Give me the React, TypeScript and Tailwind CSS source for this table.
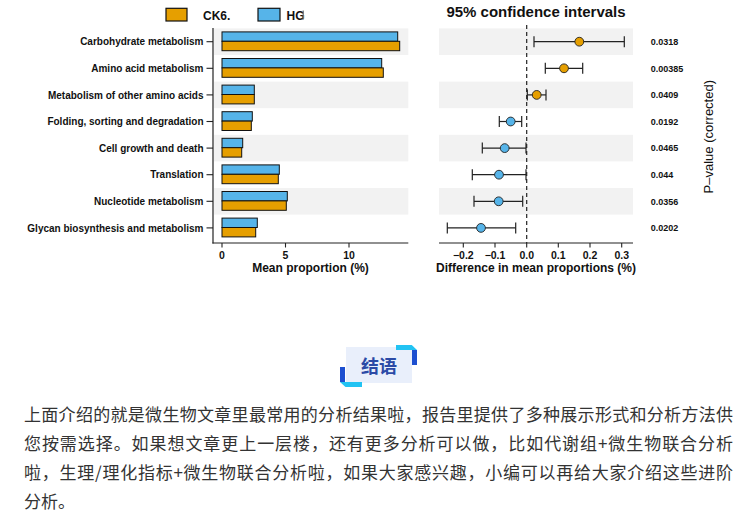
import React from "react";

const rows = [
  "Carbohydrate metabolism",
  "Amino acid metabolism",
  "Metabolism of other amino acids",
  "Folding, sorting and degradation",
  "Cell growth and death",
  "Translation",
  "Nucleotide metabolism",
  "Glycan biosynthesis and metabolism",
];
const blueEnd = [397.7, 381.7, 254.3, 252.3, 242.7, 279.3, 287.3, 257.3];
const orangeEnd = [399.7, 383.3, 254.3, 251.3, 241.7, 278.3, 286.3, 255.7];
const ci: [number, number, number, string][] = [
  [534, 624.3, 579.3, "o"],
  [545.3, 582.7, 564, "o"],
  [527.3, 546, 536.7, "o"],
  [499.3, 521.7, 510.7, "b"],
  [482.3, 526, 504.7, "b"],
  [472.3, 526, 499, "b"],
  [474, 522.7, 498.7, "b"],
  [447.3, 515.7, 481, "b"],
];
const pvals = ["0.0318", "0.00385", "0.0409", "0.0192", "0.0465", "0.044", "0.0356", "0.0202"];
const ORANGE = "#E69F00";
const BLUE = "#56B4E9";
const FONT = "'Liberation Sans', Arial, sans-serif";

function Chart() {
  const c = rows.map((_, i) => 41.7 + i * 26.6);
  return (
    <svg width={746} height={285} className="block" fontFamily={FONT}>
      {/* legend */}
      <rect x={166} y={8.3} width={21} height={12.7} fill={ORANGE} stroke="#111" strokeWidth={1.2} />
      <text x={203} y={19.8} fontSize={12} fontWeight="bold" fill="#111">CK6.</text>
      <rect x={258} y={8.3} width={22} height={12.7} fill={BLUE} stroke="#111" strokeWidth={1.2} />
      <text x={286.5} y={19.8} fontSize={12} fontWeight="bold" fill="#111">HG</text>
      <rect x={302.6} y={10.5} width={1.3} height={9} fill="#777" />

      {/* title */}
      <text x={536} y={17} fontSize={15} fontWeight="bold" textAnchor="middle" fill="#111">
        95% confidence intervals
      </text>

      {/* bands */}
      {c.map((cy, i) =>
        i % 2 === 0 ? (
          <g key={"band" + i}>
            <rect x={214} y={cy - 13.3} width={194.3} height={26.6} fill="#f2f2f2" />
            <rect x={439} y={cy - 13.3} width={194} height={26.6} fill="#f2f2f2" />
          </g>
        ) : null
      )}

      {/* left panel */}
      {c.map((cy, i) => (
        <g key={"row" + i}>
          <text x={203.5} y={cy + 3.6} fontSize={10} fontWeight="bold" textAnchor="end" fill="#111">
            {rows[i]}
          </text>
          <line x1={206.5} x2={213} y1={cy} y2={cy} stroke="#222" strokeWidth={1.1} />
          <rect x={222} y={cy - 9.8} width={blueEnd[i] - 222} height={9.4} fill={BLUE} stroke="#111" strokeWidth={1} />
          <rect x={222} y={cy - 0.4} width={orangeEnd[i] - 222} height={9.4} fill={ORANGE} stroke="#111" strokeWidth={1} />
        </g>
      ))}
      <line x1={213} x2={213} y1={28} y2={243.5} stroke="#222" strokeWidth={1.2} />
      <line x1={212.4} x2={408.3} y1={243} y2={243} stroke="#222" strokeWidth={1.2} />
      {[
        [222, "0"],
        [285.5, "5"],
        [349, "10"],
      ].map(([x, t]) => (
        <g key={"lt" + t}>
          <line x1={x as number} x2={x as number} y1={243} y2={247.5} stroke="#222" strokeWidth={1.1} />
          <text x={x as number} y={259} fontSize={10.5} fontWeight="bold" textAnchor="middle" fill="#111">
            {t}
          </text>
        </g>
      ))}
      <text x={310.5} y={271.5} fontSize={12} fontWeight="bold" textAnchor="middle" fill="#111">
        Mean proportion (%)
      </text>

      {/* right panel */}
      <line x1={526.7} x2={526.7} y1={25} y2={243} stroke="#222" strokeWidth={1.2} strokeDasharray="4 3" />
      {c.map((cy, i) => {
        const [l, r, d, k] = ci[i];
        return (
          <g key={"ci" + i}>
            <line x1={l} x2={r} y1={cy} y2={cy} stroke="#222" strokeWidth={1.2} />
            <line x1={l} x2={l} y1={cy - 5.5} y2={cy + 5.5} stroke="#222" strokeWidth={1.2} />
            <line x1={r} x2={r} y1={cy - 5.5} y2={cy + 5.5} stroke="#222" strokeWidth={1.2} />
            <circle cx={d} cy={cy} r={4.4} fill={k === "o" ? ORANGE : BLUE} stroke="#222" strokeWidth={0.9} />
            <text x={650.7} y={cy + 3.2} fontSize={9} fontWeight="bold" fill="#111">
              {pvals[i]}
            </text>
          </g>
        );
      })}
      <line x1={439} x2={633} y1={243} y2={243} stroke="#222" strokeWidth={1.2} />
      {[
        [463.3, "\u22120.2"],
        [495, "\u22120.1"],
        [526.7, "0.0"],
        [558.3, "0.1"],
        [590, "0.2"],
        [621.7, "0.3"],
      ].map(([x, t]) => (
        <g key={"rt" + t}>
          <line x1={x as number} x2={x as number} y1={243} y2={247.5} stroke="#222" strokeWidth={1.1} />
          <text x={x as number} y={259} fontSize={10.5} fontWeight="bold" textAnchor="middle" fill="#111">
            {t}
          </text>
        </g>
      ))}
      <text x={536} y={271.5} fontSize={12} fontWeight="bold" textAnchor="middle" fill="#111">
        Difference in mean proportions (%)
      </text>
      <text
        transform="translate(713,136.7) rotate(-90)"
        fontSize={13}
        textAnchor="middle"
        fill="#111"
      >
        P–value (corrected)
      </text>
    </svg>
  );
}

function Badge() {
  return (
    <div className="relative pt-[2px] pb-[4px] pl-[6px] pr-[5px]">
      <div className="w-[66px] h-[36px] bg-[#e9effb] flex items-center justify-center">
        <span
          className="text-[18px] font-bold text-[#2b4aa6] leading-none"
          style={{ fontFamily: "'Noto Sans CJK SC', sans-serif" }}
        >
          结语
        </span>
      </div>
      <div className="absolute right-0 top-0 w-[21px] h-[5px] bg-[#22c3f3] [clip-path:polygon(0_0,75%_0,100%_100%,0_100%)]" />
      <div className="absolute right-0 top-[5px] w-[5px] h-[15px] bg-[#1d4fd0]" />
      <div className="absolute left-0 bottom-[5px] w-[5px] h-[15px] bg-[#1d4fd0]" />
      <div className="absolute left-0 bottom-0 w-[22px] h-[5px] bg-[#22c3f3] [clip-path:polygon(0_0,100%_0,100%_100%,25%_100%)]" />
    </div>
  );
}

const lines = [
  "上面介绍的就是微生物文章里最常用的分析结果啦，报告里提供了多种展示形式和分析方法供",
  "您按需选择。如果想文章更上一层楼，还有更多分析可以做，比如代谢组+微生物联合分析",
  "啦，生理/理化指标+微生物联合分析啦，如果大家感兴趣，小编可以再给大家介绍这些进阶",
];

export default function App() {
  return (
    <div className="w-[746px] h-[519px] bg-white overflow-hidden">
      <Chart />
      <div className="pl-[24px] pr-[13px]">
        <div className="flex justify-center mt-[60px]">
          <Badge />
        </div>
        <div
          className="mt-[12px] text-[17px] leading-[29px] text-[#333333]"
          style={{ fontFamily: "'Noto Sans CJK SC', sans-serif" }}
          lang="zh-CN"
        >
          {lines.map((l) => (
            <div key={l} className="text-justify [text-align-last:justify]">
              {l}
            </div>
          ))}
          <div>分析。</div>
        </div>
      </div>
    </div>
  );
}
